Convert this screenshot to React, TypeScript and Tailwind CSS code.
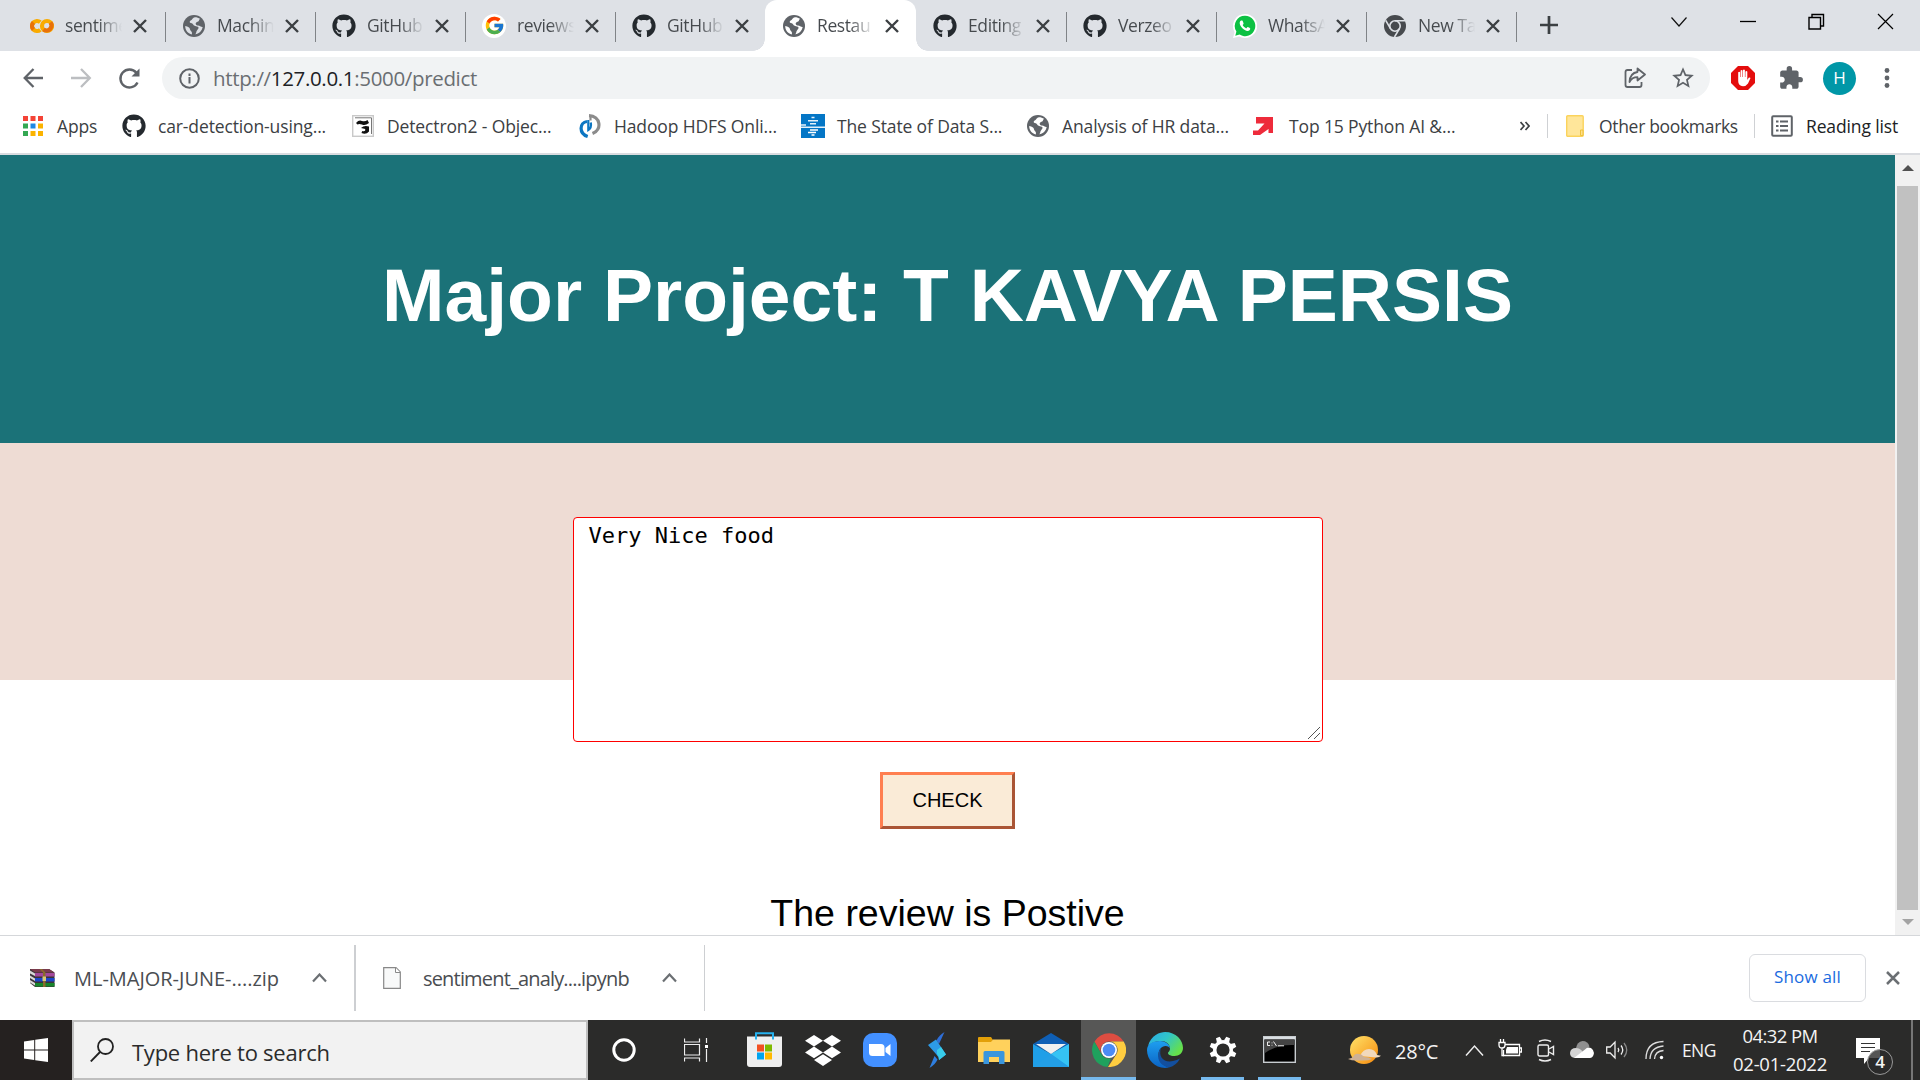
import React from 'react';
import { FaGithub } from 'react-icons/fa';
import { FcGoogle } from 'react-icons/fc';
import { MdExtension, MdStarOutline } from 'react-icons/md';

const Github = () => <FaGithub className="size-6 text-[#24292e]" />;
const GlobeShape = ({ land }: { land: string }) => (
  <svg viewBox="0 0 22 22" className="mx-px size-[22px]">
    <circle cx="11" cy="11" r="11" fill="#5f6368" />
    <path d="M12 2.200c-2.600.3-2.200 2.300-4 3-1.600.6-1.800 2.400-.3 2.800 1.700.4 2.400 1 3 2.300 1 1.200 3.400.6 4.500 1.800 1 1.100-.4 2.500-1.200 3.300-.9 1-.4 2.700-1.900 3.900 4-.4 6.900-3.600 7.600-7.300-1.500.4-2.300-1-3.600-1.200-1.500-.3-2.700-.2-3.300-1.500-.6-1.500.9-2.300 2.200-2.700 1.200-.4 1-2.100 2-2.900C15.600 2.800 14 2.200 12 2.200ZM2.200 11c0 4 2.700 7.500 6.600 8.500.3-1.400.3-2.700-.9-3.600-1.200-.8-.6-2.300-1.900-3.300-1.100-.9-2.400-1.200-3.800-1.600Z" fill={land} />
  </svg>
);
const Globe = () => <GlobeShape land="#dee1e6" />;
const GlobeOnWhite = () => <GlobeShape land="#fff" />;
const Colab = () => (
  <svg viewBox="0 0 24 24" className="size-6" fill="none" strokeWidth="4.200">
    <circle cx="17" cy="12" r="5" stroke="#f9ab00" />
    <path d="M20.500 8.500a5 5 0 0 1-7 7" stroke="#e8710a" />
    <path d="M10.300 8.200A5 5 0 1 0 10.300 15.800" stroke="#f9ab00" />
    <path d="M3.500 8.500a5 5 0 0 0 0 7" stroke="#e8710a" />
  </svg>
);
const Google = () => (
  <span className="flex size-6 items-center justify-center rounded-full bg-white"><FcGoogle className="size-[21px]" /></span>
);
const Whats = () => (
  <svg viewBox="0 0 24 24" className="size-6">
    <path d="M12 0A12 12 0 0 0 1.600 18L0 24l6.200-1.600A12 12 0 1 0 12 0Z" fill="#fff" />
    <path d="M12 1.800A10.200 10.200 0 0 0 3.400 17.500L2.300 21.700l4.300-1.100A10.200 10.200 0 1 0 12 1.800Z" fill="#0cc143" />
    <path d="M8.300 6.600c-.8.1-1.700 1.300-1.600 2.600.2 3.200 4.400 7.500 7.800 7.700 1.500.1 2.700-.9 2.800-2.200 0-.5-2.300-1.700-2.700-1.600-.4.100-1 1.300-1.400 1.300-.8-.1-3.300-2.400-3.500-3.300 0-.4.900-.9.900-1.400 0-.5-.9-3-1.300-3.100Z" fill="#fff" />
  </svg>
);
const ChromeMono = () => (
  <svg viewBox="0 0 22 22" className="mx-px size-[22px]">
    <circle cx="11" cy="11" r="11" fill="#474a4e" />
    <g fill="none" stroke="#dee1e6" strokeWidth="1.600">
      <circle cx="11" cy="11" r="5.200" /><path d="M11 5.800h10M6.500 13.600 1.700 5.300M15.500 13.600 10.500 22" />
    </g>
  </svg>
);
const X = ({ s = 14, w = 2.400, c = '#3c4043' }: { s?: number; w?: number; c?: string }) => (
  <svg width={s} height={s} viewBox="0 0 14 14" fill="none" stroke={c} strokeWidth={w}><path d="M1 1l12 12M13 1 1 13" /></svg>
);

type Icon = () => React.JSX.Element;
const tabs: { icon: Icon; text: string }[] = [
  { icon: Colab, text: 'sentime' },
  { icon: Globe, text: 'Machin' },
  { icon: Github, text: 'GitHub' },
  { icon: Google, text: 'reviews' },
  { icon: Github, text: 'GitHub' },
  { icon: GlobeOnWhite, text: 'Restau' },
  { icon: Github, text: 'Editing' },
  { icon: Github, text: 'Verzeo' },
  { icon: Whats, text: 'WhatsA' },
  { icon: ChromeMono, text: 'New Ta' },
];

function TabStrip() {
  return (
    <div className="flex h-[51px] bg-[#dee1e6]">
      <div className="flex w-[1517px] pl-[15px]">
        {tabs.map((t, i) => {
          const active = i === 5;
          const line = i !== 5 && i !== 4;
          return (
            <div key={i} className={'relative flex h-full items-center ' + (active ? 'w-[151px] rounded-t-xl bg-white pl-[17px]' : i === 0 ? 'w-[150px] pl-[15px]' : 'w-[150px] pl-[17px]')}>
              {active && (
                <>
                  <span className="absolute bottom-0 -left-3 size-3 bg-[radial-gradient(circle_at_0_0,#dee1e6_11.500px,#fff_12px)]" />
                  <span className="absolute -right-3 bottom-0 size-3 bg-[radial-gradient(circle_at_100%_0,#dee1e6_11.500px,#fff_12px)]" />
                </>
              )}
              <t.icon />
              <span className="ml-[11px] w-[68px] shrink-0 bg-linear-to-r from-[#45494d] from-48% to-transparent to-84% bg-clip-text text-[17.500px] tracking-[-0.400px] whitespace-nowrap text-transparent">
                {t.text}
              </span>
              <X />
              {line && <span className="absolute top-3 right-[-1px] h-[30px] w-[1.500px] bg-[#808387]" />}
            </div>
          );
        })}
      </div>
      <svg className="mt-[16px] ml-[23px]" width="18" height="18" stroke="#3c4043" strokeWidth="2.700"><path d="M9 0v18M0 9h18" /></svg>
      <svg className="mt-[16px] ml-[112px]" width="18" height="12" fill="none" stroke="#111" strokeWidth="1.200"><path d="M1.500 1.500 9 10l7.500-8.500" /></svg>
      <svg className="mt-[13px] ml-[52px]" width="16" height="16" stroke="#000" strokeWidth="1.300"><path d="M0 8.500h16" /></svg>
      <svg className="mt-[13px] ml-[52px]" width="17" height="17" fill="none" stroke="#000" strokeWidth="1.400"><path d="M1 4.500h11.500V16H1ZM4 4.500V1.500h11.500V13h-3" /></svg>
      <svg className="mt-[13px] ml-[52px]" width="17" height="17" fill="none" stroke="#000" strokeWidth="1.200"><path d="m1 1 15 15M16 1 1 16" /></svg>
    </div>
  );
}

function AddressRow() {
  return (
    <div className="flex h-[54px] items-center bg-white pl-[23px]">
      <svg width="21" height="20" fill="none" stroke="#5f6368" strokeWidth="2.300"><path d="M20 10H2M10.500 1 1.700 10l8.800 9" /></svg>
      <svg className="ml-[27px]" width="21" height="20" fill="none" stroke="#bcbec1" strokeWidth="2.300"><path d="M0 10h18.500M10 1l8.800 9-8.800 9" /></svg>
      <svg className="ml-[26px]" width="23" height="23" viewBox="0 0 23 23" fill="none" stroke="#5f6368" strokeWidth="2.400"><path d="M19.500 15.500A9 9 0 1 1 18.300 5.600" /><path d="M21.500 1.500v8h-8Z" fill="#5f6368" stroke="none" /></svg>
      <div className="ml-[21px] flex h-[42px] w-[1548px] items-center rounded-full bg-[#f1f3f4] pl-[17px]">
        <svg width="21" height="21" fill="none" stroke="#5f6368" strokeWidth="2"><circle cx="10.500" cy="10.500" r="9.300" /><path d="M10.500 9v6.500M10.500 5.500V8" /></svg>
        <span className="ml-[13px] w-[1411px] text-[20.500px] tracking-[-0.340px] whitespace-nowrap text-[#6a6e72]">http://<span className="text-[#202124]">127.0.0.1</span>:5000/predict</span>
        <svg className="size-[22px] shrink-0" viewBox="0 0 22 22" fill="none" stroke="#5f6368" strokeWidth="1.800" strokeLinejoin="round"><path d="M8 3H3.500Q1.500 3 1.500 5v13q0 2 2 2h12q2 0 2-2v-3" /><path d="M13.500 1.500 21 7.500l-7.500 6v-3.300Q8 10.200 5.500 15 6 6 13.500 5Z" /></svg>
        <MdStarOutline className="ml-[24px] size-[26px] shrink-0 text-[#5f6368]" />
      </div>
      <svg className="ml-[21px] size-6" viewBox="0 0 24 24"><path d="M7 0h10l7 7v10l-7 7H7l-7-7V7Z" fill="#e40d0d" /><path d="M7.200 12.500V6.300q1-1.200 1.900 0V11h.5V4.500q1-1.200 1.900 0V11h.5V4q1-1.200 1.900 0v7h.5V5.500q1-1.200 1.900 0V14l1.400-2.300q1.300-.8 1.800.4L17 17.500Q15 20.300 12 20.300 7.200 20 7.200 15Z" fill="#fff" /></svg>
      <MdExtension className="ml-[23px] size-[26px] text-[#5f6368]" />
      <span className="ml-[19px] flex size-[33px] items-center justify-center rounded-full bg-[#0097a7] text-[17px] text-white">H</span>
      <svg className="ml-[28px]" width="6" height="22" fill="#5f6368"><circle cx="3" cy="3.500" r="2.400" /><circle cx="3" cy="11" r="2.400" /><circle cx="3" cy="18.500" r="2.400" /></svg>
    </div>
  );
}

const AppsGrid = () => (
  <svg width="20" height="20">
    {['#f44336', '#f44336', '#f44336', '#34a853', '#1e88e5', '#fbb300', '#34a853', '#fbb300', '#fbb300'].map((c, i) => (
      <rect key={i} x={(i % 3) * 7.500} y={Math.floor(i / 3) * 7.500} width="5" height="5" fill={c} />
    ))}
  </svg>
);
const Detectron = () => (
  <svg viewBox="0 0 22 22" className="size-[22px]"><rect x=".7" y=".7" width="20.600" height="20.600" fill="#fff" stroke="#c9c9c9" strokeWidth="1.400" /><path d="M3 2.800h16.500V19" fill="none" stroke="#777" /><path d="M4 8q3-3.500 6-2 3 1 5.500-1l1.500 3q-4 3-7 1.500Q7 8.500 5.500 9.500ZM9 13q3-3 8-1.500v5Q14 20 9.500 18l.7-2q2.300.7 3-.5v-1.500Z" fill="#111" /></svg>
);
const Hadoop = () => (
  <svg viewBox="0 0 22 24" className="h-6 w-[22px]" fill="none">
    <path d="M8.700 22.500C-.5 19.500.5 8.500 8 7.500" stroke="#0c76c2" strokeWidth="3.200" />
    <path d="M9.300 6v10q3.500-2 2.500-7.500" stroke="#0c76c2" strokeWidth="2.200" />
    <path d="M10 1.700c11.500.3 13.500 14 3.500 17.800" stroke="#8b8b8b" strokeWidth="3.200" />
    <path d="M11.500 2v4.500" stroke="#8b8b8b" strokeWidth="2.200" />
  </svg>
);
const StateIcon = () => (
  <svg viewBox="0 0 24 24" className="size-6"><rect width="24" height="24" fill="#0476c6" /><g stroke="#fff" strokeWidth="1.500"><path d="M10.500 3.500h3M7 6.800h10M9 9.700h6M0 13.200h24M0 10.900h5" opacity=".9" /><path d="M9 16h8M7 18.400h8M10.500 21h3" /></g></svg>
);
const RedArrow = () => <svg width="20" height="20" viewBox="0 0 20 20"><path d="M3 1h17v16h-4.500v-4L7 19H0v-4.500h5l6.500-7H3Z" fill="#ee2b3b" /></svg>;

const bookmarks: { icon: Icon; text: string; item: string; label: string }[] = [
  { icon: AppsGrid, text: 'Apps', item: 'w-[99px]', label: 'ml-[14px]' },
  { icon: Github, text: 'car-detection-using...', item: 'w-[230px]', label: 'ml-[12px]' },
  { icon: Detectron, text: 'Detectron2 - Objec...', item: 'w-[227px]', label: 'ml-[13px]' },
  { icon: Hadoop, text: 'Hadoop HDFS Onli...', item: 'w-[222px]', label: 'ml-[13px]' },
  { icon: StateIcon, text: 'The State of Data S...', item: 'w-[225px]', label: 'ml-[12px]' },
  { icon: GlobeOnWhite, text: 'Analysis of HR data...', item: 'w-[227px]', label: 'ml-[12px]' },
  { icon: RedArrow, text: 'Top 15 Python AI &...', item: 'w-[267px]', label: 'ml-[16px]' },
];

function BookmarkBar() {
  return (
    <div className="flex h-[50px] items-center border-b-2 border-[#dadce0] bg-white pb-[6px] pl-[23px] text-[17.500px] tracking-[-0.130px] whitespace-nowrap text-[#3c4043]">
      {bookmarks.map((b) => (
        <div key={b.text} className={'flex shrink-0 items-center ' + b.item}>
          <b.icon />
          <span className={b.label}>{b.text}</span>
        </div>
      ))}
      <svg width="10" height="10" fill="none" stroke="#3c4043" strokeWidth="1.700"><path d="m.5 1 3.500 4L.5 9M5.500 1 9 5 5.500 9" /></svg>
      <span className="ml-[17px] h-6 w-px bg-[#cfd1d4]" />
      <svg className="ml-[18px]" width="18" height="22"><rect x=".7" y=".7" width="16.500" height="20.500" rx="1" fill="#ffe69a" stroke="#fbd35c" strokeWidth="1.400" /><path d="M14.500 15h2.500v5.500h-2.500Z" fill="#ffe08a" stroke="#efc13c" /></svg>
      <span className="ml-[15px] w-[140px] tracking-[-0.320px]">Other bookmarks</span>
      <span className="ml-[15px] h-6 w-px bg-[#cfd1d4]" />
      <svg className="ml-[16px]" width="22" height="22" fill="none" stroke="#5f6368" strokeWidth="2"><rect x="1.200" y="1.200" width="19.600" height="19.600" rx="1" /><path d="M5 6.500h2.500M9 6.500h8M5 11h2.500M9 11h8M5 15.500h2.500M9 15.500h8" /></svg>
      <span className="ml-[13px] text-[#202124]">Reading list</span>
    </div>
  );
}

function Page() {
  return (
    <div className="flex h-[780px] overflow-hidden bg-white font-['Liberation_Sans',sans-serif] text-black">
      <main className="flex w-[1895px] flex-col items-center">
        <header className="flex h-[288px] w-full items-center justify-center bg-[#1b7278]">
          <h1 className="pb-[8px] text-[75px] leading-[86px] font-bold whitespace-nowrap text-white">Major Project: T KAVYA PERSIS</h1>
        </header>
        <div className="flex h-[237px] w-full justify-center bg-[#eedcd4]">
          <div className="relative mt-[74px] h-[225px] w-[750px] shrink-0">
            <textarea
              readOnly
              className="block size-full resize-none rounded-[4px] border border-[#f00] bg-white px-[15px] py-[4px] font-['DejaVu_Sans_Mono',monospace] text-[22px] leading-[28px] outline-none"
              value="Very Nice food"
            />
            <svg className="absolute right-[2px] bottom-[2px]" width="14" height="14" stroke="#555" strokeWidth="1"><path d="M1 13 13 1M7 13l6-6" /></svg>
          </div>
        </div>
        <button className="mt-[92px] h-[57px] w-[135px] shrink-0 border-3 border-t-[#ff7f50] border-r-[#aa5535] border-b-[#aa5535] border-l-[#ff7f50] bg-[#faebd7] pb-[2px] text-[20px]">CHECK</button>
        <p className="mt-[63px] text-[37.500px] leading-[43px] whitespace-nowrap">The review is Postive</p>
      </main>
      <div className="flex w-[25px] flex-col items-center bg-[#f1f1f1]">
        <svg className="mt-[10px]" width="12" height="6"><path d="M6 0l6 6H0Z" fill="#505050" /></svg>
        <div className="mt-[15px] h-[724px] w-[21px] bg-[#c1c1c1]" />
        <svg className="mt-[9px]" width="12" height="6"><path d="M0 0h12L6 6Z" fill="#a3a3a3" /></svg>
      </div>
    </div>
  );
}

const Caret = () => <svg width="15" height="10" fill="none" stroke="#6b6f73" strokeWidth="2.200"><path d="m1 8.500 6.500-7 6.500 7" /></svg>;

function Shelf() {
  return (
    <div className="flex h-[85px] items-center border-t border-[#d5d7da] bg-white text-[20px] whitespace-nowrap text-[#4a4d51]">
      <svg className="ml-[30px]" width="25" height="20" viewBox="0 0 25 20">
        <path d="M0 1h19l5.500 3.500V19H5L0 15Z" fill="#3b3338" />
        <path d="M0 1h19l5.500 3.500H5Z" fill="#7a3a4c" />
        <path d="M5 5h19.500v3.500H5Z" fill="#a3479b" />
        <path d="M5 10h19.500v3.500H5Z" fill="#1b45c8" />
        <path d="M5 15h19.500v3.500H5Z" fill="#16852b" />
        <path d="m0 2.500 5 3v2.500L0 5.500ZM0 7.500l5 3V13l-5-3ZM0 12l5 3v2.500l-5-3Z" fill="#d8d8d8" />
        <path d="M9.500 1h2.500l3.500 3.500V19h-2.500V4.500Z" fill="#8a6a2c" />
        <path d="M12.500 8.500h3.500v4.500h-3.500Z" fill="#d9c878" />
      </svg>
      <span className="mt-[1px] ml-[19px] w-[204px] tracking-[-0.020px]">ML-MAJOR-JUNE-....zip</span>
      <span className="ml-[34px]"><Caret /></span>
      <span className="ml-[27px] h-[66px] w-[2px] bg-[#cdcfd2]" />
      <svg className="ml-[27px]" width="18" height="22" viewBox="0 0 18 22"><path d="M.7.7H13L17.300 5v16.300H.7Z" fill="#f8f9f9" stroke="#888" strokeWidth="1.200" /><path d="M12.500.7V5.500h4.800" fill="#fff" stroke="#888" /></svg>
      <span className="mt-[1px] ml-[22px] w-[206px] tracking-[-0.820px]">sentiment_analy....ipynb</span>
      <span className="ml-[33px]"><Caret /></span>
      <span className="ml-[27px] h-[66px] w-px bg-[#cdcfd2]" />
      <button className="ml-auto flex h-[48px] w-[117px] items-center justify-center rounded-md border border-[#dadce0] pb-[3px] text-[17px] font-medium tracking-[0.200px] text-[#1a6be0]">Show all</button>
      <span className="mr-[20px] ml-[20px]"><X c="#6b6f73" w={2.500} /></span>
    </div>
  );
}

function Taskbar() {
  return (
    <div className="flex h-[60px] items-center bg-[#2b2b2a] whitespace-nowrap text-[#f4f4f4]">
      <div className="flex h-full w-[72px] items-center justify-center bg-[#252120]">
        <svg width="24" height="24" viewBox="0 0 24 24" fill="#fff"><path d="M0 3.400 10.200 2v9.400H0ZM11.200 1.800 24 0v11.400H11.200ZM0 12.400h10.200V22L0 20.600ZM11.200 12.400H24V24l-12.800-1.800Z" /></svg>
      </div>
      <div className="flex h-full w-[516px] items-center border-2 border-[#bfbfbf] bg-[#f2f2f2] pl-[16px] text-[#2b2b2b]">
        <svg width="24" height="24" fill="none" stroke="#222" strokeWidth="1.800"><circle cx="15.500" cy="8.500" r="7.500" /><path d="M10 14 .8 23.500" /></svg>
        <span className="ml-[18px] pt-[4px] text-[22px] tracking-[-0.250px]">Type here to search</span>
      </div>
      <svg className="ml-[24px]" width="24" height="24" fill="none"><circle cx="12" cy="12" r="10.200" stroke="#fff" strokeWidth="3" /></svg>
      <svg className="ml-[48px]" width="24" height="24" fill="none" stroke="#eee" strokeWidth="1.200"><path d="M.5.500v3.500h15V.5M.5 6.500h15V17H.5ZM.5 23.500V20h15v3.500M22.500 0v5M22.500 11v13" /><path d="M21 7h3v3h-3Z" fill="#fff" stroke="none" /></svg>
      <svg className="ml-[39px]" width="35" height="36" viewBox="0 0 35 36"><path d="M9 7V1.300h17V7" fill="none" stroke="#25b1ee" strokeWidth="2" /><path d="M0 4.500h35V32q0 3-3 3H3q-3 0-3-3Z" fill="#efefef" /><path d="M8 3.500h2v4H8ZM25 3.500h2v4h-2Z" fill="#25b1ee" /><path d="M10 12.500h7v7h-7Z" fill="#f25022" /><path d="M18 12.500h7v7h-7Z" fill="#7fba00" /><path d="M10 20.500h7v7h-7Z" fill="#00a4ef" /><path d="M18 20.500h7v7h-7Z" fill="#ffb900" /></svg>
      <svg className="ml-[23px]" width="36" height="31" viewBox="0 0 36 31" fill="#fff"><path d="m9 0 9 5.800-9 5.800-9-5.800ZM27 0l9 5.800-9 5.800-9-5.800ZM9 11.600l9 5.800-9 5.800-9-5.800ZM27 11.600l9 5.800-9 5.800-9-5.800ZM18 19.300l9 5.800-9 5.900-9-5.900Z" /></svg>
      <svg className="ml-[22px]" width="34" height="34" viewBox="0 0 34 34"><rect width="34" height="34" rx="10" fill="#4390ff" /><path d="M6 11h12q3.500 0 3.500 3.500V23h-12Q6 23 6 19.500ZM22.500 15l5-4v12l-5-4Z" fill="#fff" /></svg>
      <svg className="ml-[31px]" width="18" height="36" viewBox="0 0 18 36"><path d="M16.500 0 11 12 8.500 8.500Q11 3 16.500 0Z" fill="#2f6fd8" /><path d="M0 13 8 7.500l10 15L11 28Q11 25 8 22Z" fill="#2d9be8" /><path d="m9 18 4-3 5 7.500-7 5.500q0-4-2-6Z" fill="#38cdea" /><path d="M1.500 36 6.500 24l3 3.500Q7 33 1.500 36Z" fill="#2f7fe0" /></svg>
      <svg className="ml-[32px]" width="32" height="27" viewBox="0 0 32 27"><path d="M0 1q0-1 1-1h12l2 3-2 4H0Z" fill="#e3a008" /><path d="M0 5h13l2-2.500h17V25H0Z" fill="#ffd15c" /><path d="M5.500 27V15.500q0-1.500 1.500-1.500h18q1.500 0 1.500 1.500V27H21v-7H11v7Z" fill="#3a96dd" /></svg>
      <svg className="ml-[23px]" width="36" height="34" viewBox="0 0 36 34"><path d="M0 11 18 0l18 11-18 10Z" fill="#0f5fb5" /><path d="M0 11 18 21 36 11v23H0Z" fill="#1f9fe8" /><path d="M18 21 36 11v23Z" fill="#35c3f4" /><path d="M18 21 0 34h36Z" fill="#239fe6" /><path d="M3 11h30L18 21Z" fill="#f0f0f0" /></svg>
      <div className="ml-[12px] flex h-full w-[55px] flex-col items-center border-b-3 border-[#76b9ed] bg-[#575756] pt-[13px]">
        <svg width="34" height="34" viewBox="0 0 34 34"><path d="M2.500 8.500A17 17 0 0 1 31.700 8.500H17a8.500 8.500 0 0 0-7.400 12.700Z" fill="#dd4d41" /><path d="M2.300 8.500 9.600 21.200A8.500 8.500 0 0 0 19 25.200L15.500 34A17 17 0 0 1 2.300 8.500Z" fill="#1fa15d" /><path d="M31.700 8.500A17 17 0 0 1 16 34l8.400-12.700A8.500 8.500 0 0 0 17 8.500Z" fill="#ffcd40" /><circle cx="17" cy="17" r="8" fill="#fff" /><circle cx="17" cy="17" r="6.300" fill="#4c8bf5" /></svg>
      </div>
      <svg className="ml-[11px]" width="36" height="36" viewBox="0 0 36 36">
        <defs>
          <linearGradient id="ea" x1="0" x2="1" y1="0" y2=".6"><stop offset="0" stopColor="#2aa9e8" /><stop offset=".5" stopColor="#30c5c9" /><stop offset="1" stopColor="#66e04a" /></linearGradient>
          <linearGradient id="eb" x1="0" x2="0" y1="0" y2="1"><stop offset="0" stopColor="#1e9ff0" /><stop offset="1" stopColor="#0b63c4" /></linearGradient>
        </defs>
        <path d="M1 14C4 3 13 0 18 0c11 0 18 8 18 16 0 5-4 8-8.500 8-5 0-6.500-2-6.500-3s2-1.500 2-4.500c0-4-4-7.500-9-7.500-7 0-11 3-13 5Z" fill="url(#ea)" />
        <path d="M0 18C0 12 6 9 13 9c6 0 10 4 10 7.500q-1-2.500-4.500-2.500c-4 0-7 4-7 8.500C11.500 29 17 34 22 35.500 10 38 0 29 0 18Z" fill="url(#eb)" />
        <path d="M14 16c-3 9 3 15 12 13q4-1 7-2.500-3.500 7-11 9C14 34 10 28 11.500 22q.5-4 2.500-6Z" fill="#134f9e" />
      </svg>
      <div className="ml-[18px] flex h-full w-[43px] flex-col items-center border-b-3 border-[#76b9ed] pt-[16px]">
        <svg width="28" height="28" viewBox="-14 -14 28 28"><circle r="8.300" fill="none" stroke="#fff" strokeWidth="3.500" />{[0, 45, 90, 135, 180, 225, 270, 315].map((a) => <path key={a} d="M-2.800-9-2-13.500H2L2.800-9Z" fill="#fff" transform={`rotate(${a + 22.500})`} />)}</svg>
      </div>
      <div className="ml-[14px] flex h-full w-[43px] flex-col items-center border-b-3 border-[#76b9ed] pt-[16px]">
        <svg width="33" height="27" viewBox="0 0 33 27"><rect x=".7" y=".7" width="31.600" height="25.600" fill="#000" stroke="#c8cdd1" strokeWidth="1.400" /><path d="M1 1h31v2.500H1Z" fill="#d9dee2" /><path d="M1.500 3.500h30V9Q15 8 2 17Z" fill="#444" /><path d="M7 6H4.500v3.500H7M9 6.500v.8M9 8.800v.8M10.500 5.500l3 4.500M15 9.800h6" fill="none" stroke="#eee" /></svg>
      </div>
      <svg className="ml-[47px]" width="34" height="30" viewBox="0 0 34 30"><defs><linearGradient id="sun" x1="0" x2="1" y1="0" y2="1"><stop offset="0" stopColor="#ffe36a" /><stop offset="1" stopColor="#f78a0c" /></linearGradient></defs><circle cx="16" cy="15" r="14" fill="url(#sun)" /><path d="M12 21q3-7 9-7 6 0 8 6l4 .8q-2 2-5 1.700Z" fill="#f1d9bd" /><path d="M0 24q4-1 5-2 2-4 6-3 3 0 5 3 5 0 8 2-4 2-12 1.500Q4 26 0 24Z" fill="#cdb196" /></svg>
      <span className="ml-[13px] w-[44px] pt-[4px] text-[20px] tracking-[-0.200px]">28°C</span>
      <svg className="ml-[26px]" width="19" height="13" fill="none" stroke="#eee" strokeWidth="1.500"><path d="m1 11.500 8.500-9.500 8.500 9.500" /></svg>
      <svg className="mb-[2px] ml-[14px]" width="24" height="20" viewBox="0 0 24 20" fill="none" stroke="#fff" strokeWidth="1.300"><path d="M7 5.500h14.500v11H5.500V11M22 9h1.500v4H22" /><path d="M9 8h11v6.500H8V11Z" fill="#fff" stroke="none" /><path d="M1 3.500h6V6q0 3-3 3T1 6ZM2.500 0v3.500M5.500 0v3.500M4 9v7.500h2" /></svg>
      <svg className="ml-[15px]" width="18" height="23" viewBox="0 0 18 23" fill="none" stroke="#eee" strokeWidth="1.400"><rect x="1" y="6" width="10.500" height="11" rx="1.500" /><path d="m12 10 4.500-2.500v8L12 13M2 2.500q6-3 12 0M2 20.500q6 3 12 0" /></svg>
      <svg className="ml-[15px]" width="24" height="18" viewBox="0 0 24 18"><path d="M6 7Q7 1 12.500 0 18 0 19.500 5.500L13 11Z" fill="#8f8f8f" /><path d="M5 17q-5-.5-5-5 .5-5 6-5 4 0 7 4l5 6Z" fill="#d4d4d4" /><path d="M4 17 15 8.500q2.500-3 6-1.500 3.500 2.500 2.800 6-1 4-4 4Z" fill="#fff" /></svg>
      <svg className="ml-[12px]" width="23" height="20" viewBox="0 0 23 20" fill="none" stroke="#eee" strokeWidth="1.300"><path d="M.7 7h3.500L9 2v16l-4.800-5H.7ZM12 8q1.500 2 0 4M15 5.500q3.500 4.500 0 9" /><path d="M18 3q5.500 7 0 14" stroke="#888" /></svg>
      <svg className="ml-[16px]" width="19" height="20" viewBox="0 0 19 20" fill="none" stroke="#ddd" strokeWidth="1.300"><path d="M1 19Q1 2 18.500 1.500M5 19Q5.500 7 18.500 6M9.500 19q.5-8 9-8.500" /><circle cx="16.500" cy="17.500" r="1.700" fill="#fff" stroke="none" /></svg>
      <span className="ml-[18px] w-[35px] text-[17.500px] tracking-[-0.600px]">ENG</span>
      <div className="ml-[14px] flex w-[98px] flex-col items-center text-[18.500px] leading-[28px] tracking-[-0.250px]">
        <span className="tracking-[-0.600px]">04:32 PM</span>
        <span>02-01-2022</span>
      </div>
      <div className="relative ml-[27px] h-[24px] w-[24px]">
        <svg width="24" height="27" viewBox="0 0 24 27"><path d="M0 0h24v20H13l-5 6v-6H0Z" fill="#fff" /><path d="M5 5.500h14M5 9.500h14M5 13.500h9" stroke="#333" strokeWidth="1.200" /></svg>
        <span className="absolute top-[11px] left-[11px] flex size-[26px] items-center justify-center rounded-full border border-[#999] bg-[#2b2b2bcc] text-[17px] font-semibold">4</span>
      </div>
      <span className="ml-[31px] h-full w-[2px] bg-[#777]" />
    </div>
  );
}

export default function App() {
  return (
    <div className="flex h-[1080px] w-[1920px] flex-col overflow-hidden font-['Open_Sans',sans-serif]">
      <TabStrip />
      <AddressRow />
      <BookmarkBar />
      <Page />
      <Shelf />
      <Taskbar />
    </div>
  );
}
